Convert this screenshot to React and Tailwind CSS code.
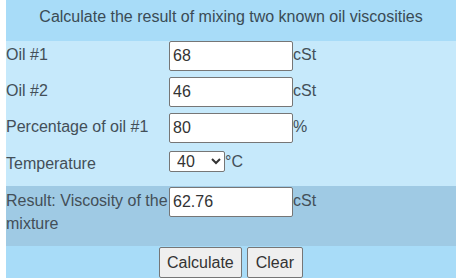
const font = { fontFamily: '"Liberation Sans", Arial, sans-serif' };

function Field({ value }) {
  return (
    <input
      type="text"
      defaultValue={value}
      className="box-border h-[30px] w-[124px] rounded-[2px] border border-[#767676] bg-white px-[3px] text-[16px] text-[#333] outline-none"
    />
  );
}

function Row({ label, children, unit, className = "" }) {
  return (
    <div className={`flex ${className}`}>
      <div className="w-[163px] leading-[23px] pt-[2px]">{label}</div>
      <div className="flex items-start">
        {children}
        <span className="leading-[23px] pt-[2px]">{unit}</span>
      </div>
    </div>
  );
}

export default function App() {
  return (
    <div
      className="ml-[6px] w-[450px] text-[16px] text-[#434f58]"
      style={font}
    >
      <div className="flex h-[41px] justify-center bg-[#a8dcf8] pt-[5px] text-[#3a4b55]">
        Calculate the result of mixing two known oil viscosities
      </div>
      <div className="bg-[#c6e9fb]">
        <Row label="Oil #1" unit="cSt" className="h-[36px]">
          <Field value="68" />
        </Row>
        <Row label="Oil #2" unit="cSt" className="h-[36px]">
          <Field value="46" />
        </Row>
        <Row label="Percentage of oil #1" unit="%" className="h-[36px]">
          <Field value="80" />
        </Row>
        <div className="flex h-[37px] pt-[2px]">
          <div className="w-[163px] leading-[23px] pt-[1px]">Temperature</div>
          <select
            defaultValue="40"
            className="box-border h-[21px] w-[56px] rounded-[2px] border border-[#767676] bg-white pl-[3px] text-[16px] text-[#333]"
          >
            <option value="40">40</option>
            <option value="100">100</option>
          </select>
          <span className="leading-[21px]">°C</span>
        </div>
      </div>
      <div className="flex h-[60px] bg-[#9fcae4] pt-[1px]">
        <div className="w-[163px] leading-[23px] pt-[2px]">
          Result: Viscosity of the mixture
        </div>
        <div className="flex items-start">
          <Field value="62.76" />
          <span className="leading-[23px] pt-[2px]">cSt</span>
        </div>
      </div>
      <div className="flex h-[32px] justify-center gap-[5px] bg-[#a8dcf8] pt-[1px]">
        <button className="h-[31px] rounded-[2px] border border-[#767676] bg-[#efefef] px-[7px] text-[16px] text-[#333]">
          Calculate
        </button>
        <button className="h-[31px] rounded-[2px] border border-[#767676] bg-[#efefef] px-[8px] text-[16px] text-[#333]">
          Clear
        </button>
      </div>
    </div>
  );
}
